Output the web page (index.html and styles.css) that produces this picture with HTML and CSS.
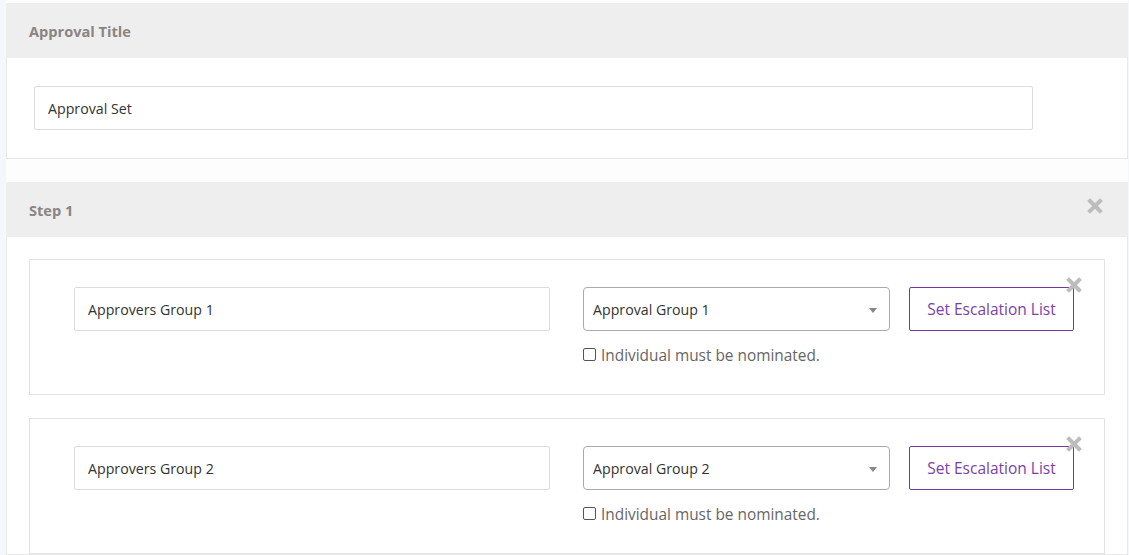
FILE: index.html
```html
<!DOCTYPE html>
<html>
<head>
<meta charset="utf-8">
<link rel="stylesheet" href="styles.css">
</head>
<body>
<div class="page">
  <section class="panel">
    <header class="panel-head">
      <h2 class="panel-title">Approval Title</h2>
    </header>
    <div class="panel-body title-body">
      <input class="text-input title-input" type="text" value="Approval Set">
    </div>
  </section>

  <section class="panel step-panel">
    <header class="panel-head">
      <h2 class="panel-title">Step 1</h2>
      <span class="close-icon head-close"><svg viewBox="0 0 16 16" width="16" height="16"><path d="M3 3L13 13M13 3L3 13" stroke="currentColor" stroke-width="4" stroke-linecap="square"/></svg></span>
    </header>
    <div class="panel-body step-body">
      <div class="group-card">
        <span class="close-icon card-close"><svg viewBox="0 0 16 16" width="16" height="16"><path d="M3 3L13 13M13 3L3 13" stroke="currentColor" stroke-width="4" stroke-linecap="square"/></svg></span>
        <input class="text-input group-input" type="text" value="Approvers Group 1">
        <div class="select-col">
          <div class="select-box"><span>Approval Group 1</span><span class="caret"></span></div>
          <label class="check-row"><span class="checkbox"></span>Individual must be nominated.</label>
        </div>
        <button class="esc-btn">Set Escalation List</button>
      </div>
      <div class="group-card">
        <span class="close-icon card-close"><svg viewBox="0 0 16 16" width="16" height="16"><path d="M3 3L13 13M13 3L3 13" stroke="currentColor" stroke-width="4" stroke-linecap="square"/></svg></span>
        <input class="text-input group-input" type="text" value="Approvers Group 2">
        <div class="select-col">
          <div class="select-box"><span>Approval Group 2</span><span class="caret"></span></div>
          <label class="check-row"><span class="checkbox"></span>Individual must be nominated.</label>
        </div>
        <button class="esc-btn">Set Escalation List</button>
      </div>
    </div>
  </section>
</div>
</body>
</html>
```

FILE: styles.css
```css
html, body {
  margin: 0;
  padding: 0;
}
body {
  background: #f5f7fa;
  font-family: "Open Sans", "Liberation Sans", sans-serif;
  color: #333;
  overflow: hidden;
}
.page {
  margin-left: 6px;
  padding-top: 3px;
  background: #fdfdfd;
  height: 552px;
  width: 1122px;
}
.panel {
  border: 1px solid #e8e8e8;
  border-top: none;
  background: #fff;
}
.step-panel {
  margin-top: 23px;
}
.panel-head {
  position: relative;
  height: 55px;
  background: #eeeeee;
  display: flex;
  align-items: center;
  padding-left: 22px;
  margin: 0 -1px;
}
.panel-title {
  margin: 0;
  font-size: 14.6px;
  font-weight: 700;
  color: #8a8581;
  padding-left: 1px;
}
.close-icon {
  position: absolute;
  color: #bdbdbd;
  display: block;
  width: 16px;
  height: 16px;
}
.close-icon svg {
  display: block;
}
.head-close {
  right: 25px;
  top: 16px;
}
.title-body {
  padding: 28px 94px 28px 27px;
}
.text-input {
  box-sizing: border-box;
  height: 44px;
  border: 1px solid #dcdcdc;
  border-radius: 2px;
  font-family: "Open Sans", "Liberation Sans", sans-serif;
  font-size: 14.2px;
  color: #333;
  padding: 0 13px;
  background: #fff;
  outline: none;
}
.title-input {
  width: 100%;
  display: block;
}
.step-body {
  padding: 22px 22px 0 22px;
  display: flex;
  flex-direction: column;
  gap: 23px;
}
.group-card {
  position: relative;
  border: 1px solid #e3e3e3;
  padding: 27px 30px 28px 44px;
  display: flex;
  align-items: flex-start;
  height: 136px;
  box-sizing: border-box;
}
.card-close {
  right: 22px;
  top: 17px;
}
.group-input {
  width: 476px;
  flex: none;
}
.select-col {
  margin-left: 33px;
  width: 307px;
  flex: none;
}
.select-box {
  box-sizing: border-box;
  height: 44px;
  border: 1px solid #aaa;
  border-radius: 4px;
  display: flex;
  align-items: center;
  justify-content: space-between;
  padding: 0 12px 0 9px;
  font-size: 14.2px;
  color: #333;
}
.caret {
  width: 0;
  height: 0;
  border-left: 4px solid transparent;
  border-right: 4px solid transparent;
  border-top: 5px solid #888;
  margin-top: 2px;
}
.check-row {
  display: flex;
  align-items: center;
  margin-top: 14px;
  font-size: 15.4px;
  color: #666;
  line-height: 22px;
}
.checkbox {
  box-sizing: border-box;
  width: 13px;
  height: 13px;
  border: 1px solid #555;
  border-radius: 2px;
  margin-right: 5px;
  margin-top: -4px;
  background: #fff;
}
.esc-btn {
  margin-left: 19px;
  box-sizing: border-box;
  width: 165px;
  height: 44px;
  border: 1px solid #7537a8;
  border-radius: 2px;
  background: #fff;
  color: #7a3fa8;
  font-family: "Open Sans", "Liberation Sans", sans-serif;
  font-size: 15.5px;
  padding: 0 0 1px;
  flex: none;
}
```
